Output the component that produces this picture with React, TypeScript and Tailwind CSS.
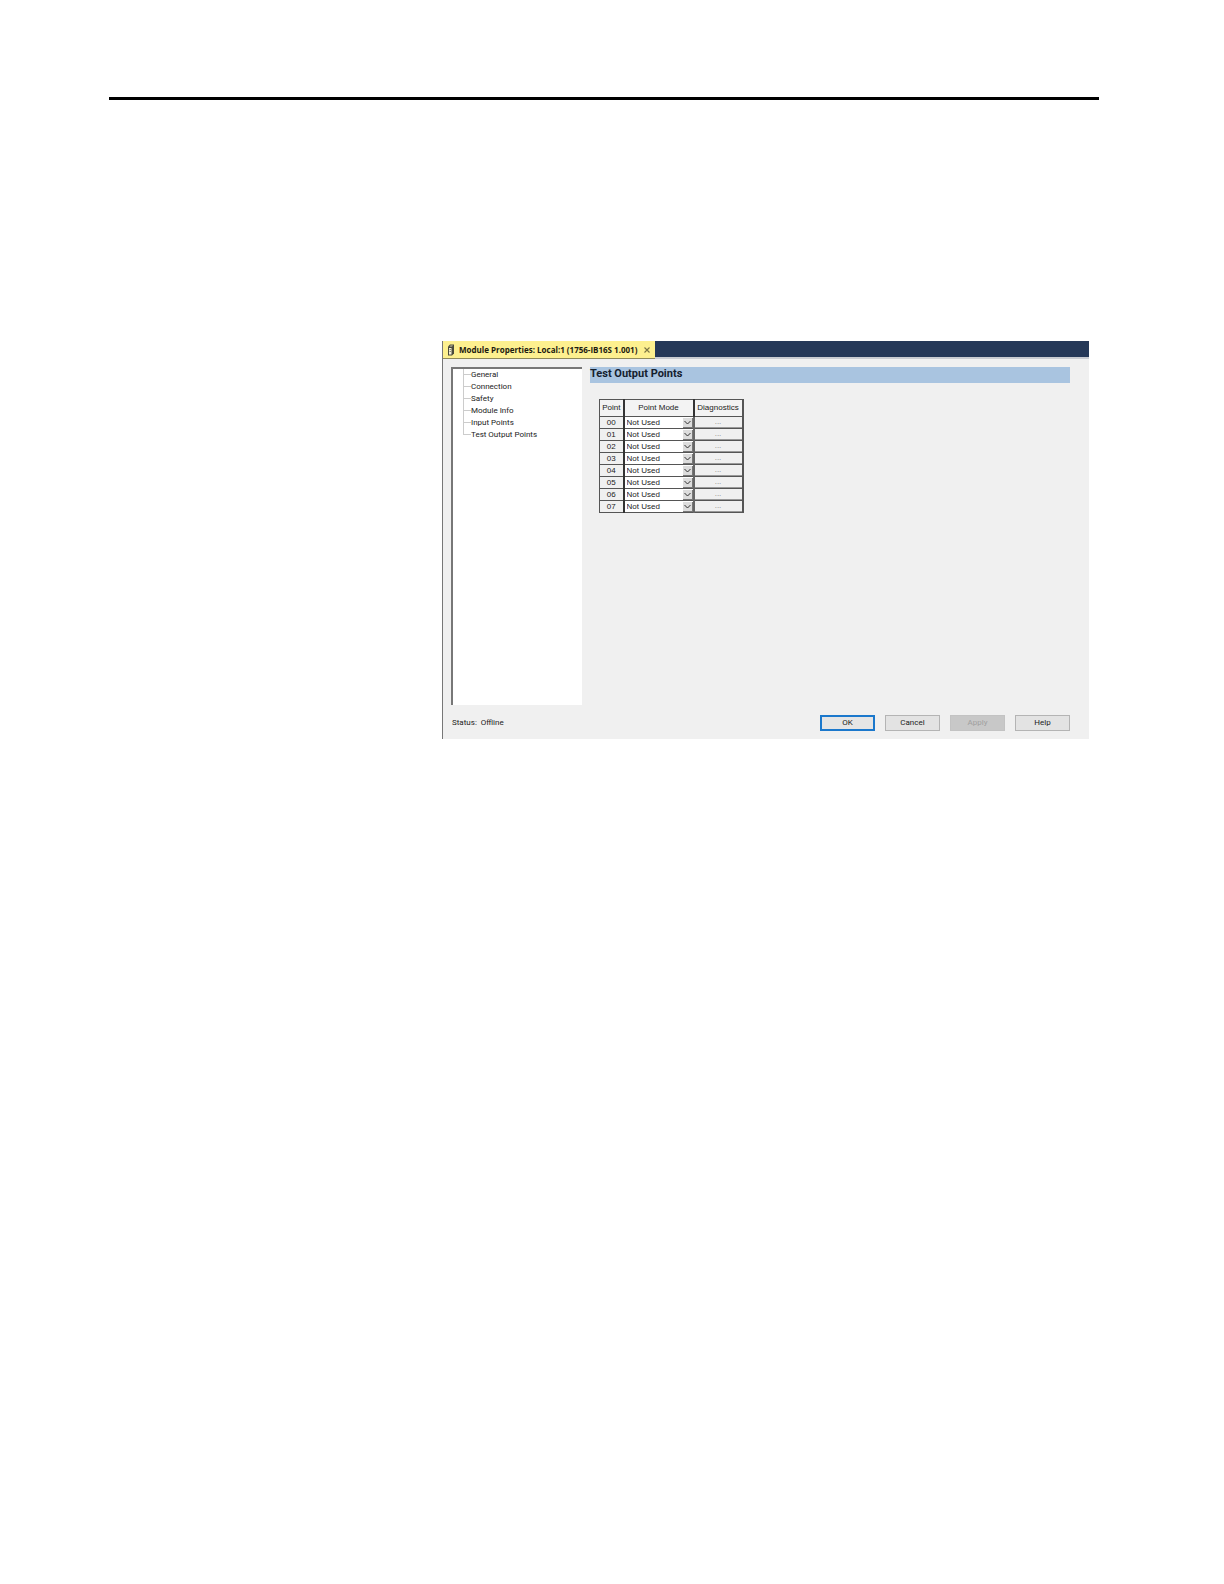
import React from 'react';

const pages = ['General', 'Connection', 'Safety', 'Module Info', 'Input Points', 'Test Output Points'];

const points = ['00', '01', '02', '03', '04', '05', '06', '07'];

const ModuleIcon: React.FC = () => (
  <svg className="shrink-0" width="8" height="12" viewBox="0 0 8 12" aria-hidden="true">
    <path d="M1 2.5 3 .5h4v9l-2 2H1z" fill="#4a4a3c" />
    <path d="M2 4h2.5v6.5H2z" fill="#f4f0d8" />
    <path d="M2.5 2.5 3.5 1.5H6L5 2.5z" fill="#d8d4b0" />
    <path d="M2.5 5.5h1.5M2.5 7.5h1.5" stroke="#77745c" strokeWidth="0.8" />
  </svg>
);

const TitleBar: React.FC = () => (
  <div className="flex h-[18px] border-b-2 border-[#c9ccd2] bg-[#253858]">
    <div className="-mb-0.5 flex w-[212px] items-center border-b border-[#8f8a5a] bg-[#fdf08f] pl-1">
      <ModuleIcon />
      <span className="ml-1 grow whitespace-nowrap font-['Open_Sans',sans-serif] text-[8px] font-bold leading-4 text-[#1c1a10]">
        Module Properties: Local:1 (1756-IB16S 1.001)
      </span>
      <button type="button" aria-label="Close" className="mr-1 flex h-3 w-2 items-center justify-center">
        <svg width="6" height="6" viewBox="0 0 6 6" aria-hidden="true">
          <path d="M.5.5l5 5M5.5.5l-5 5" stroke="#7a7446" strokeWidth="1.1" />
        </svg>
      </button>
    </div>
  </div>
);

const PageTree: React.FC = () => (
  <nav className="w-[131px] shrink-0 border-l-2 border-t-2 border-[#777777] bg-white pl-2.5 font-['Roboto',sans-serif]">
    <ul>
      {pages.map((page) => (
        <li key={page} className="group flex h-3 items-center">
          <span className="flex h-full w-2 flex-col">
            <span className="h-1.5 border-b border-l border-[#cccccc]" />
            <span className="h-1.5 border-l border-[#cccccc] group-last:border-transparent" />
          </span>
          <a href="#" className="whitespace-nowrap text-[8px] leading-3">
            {page}
          </a>
        </li>
      ))}
    </ul>
  </nav>
);

const PointsTable: React.FC = () => (
  <table className="ml-[9px] mt-4 w-[143px] table-fixed border-collapse border border-r-2 border-[#555555] text-[8px] leading-[10px]">
    <colgroup>
      <col className="w-6" />
      <col className="w-[70px]" />
      <col className="w-[49px]" />
    </colgroup>
    <thead>
      <tr className="h-[17px] bg-[#f3f3f3]">
        <th className="border-r-2 border-[#333333] p-0 font-normal">Point</th>
        <th className="border-r-2 border-[#333333] p-0 font-normal">Point Mode</th>
        <th className="p-0 font-normal">Diagnostics</th>
      </tr>
    </thead>
    <tbody>
      {points.map((point) => (
        <tr key={point} className="h-3 border-t border-[#555555]">
          <th className="border-r-2 border-[#333333] bg-[#f0f0f0] p-0 font-normal">{point}</th>
          <td className="border-r-2 border-[#666666] bg-white p-0">
            <div className="relative flex h-[11px]">
              <select
                aria-label={`Point mode ${point}`}
                className="h-[11px] w-full appearance-none pl-0.5 text-[8px] leading-[11px]"
              >
                <option>Not Used</option>
              </select>
              <span className="pointer-events-none absolute bottom-0 right-0 flex h-2.5 w-2.5 items-center justify-center border-b border-r border-[#777777] bg-[#dddddd]">
                <svg width="7" height="5" viewBox="0 0 7 5" aria-hidden="true">
                  <path d="M.5 1l3 3 3-3" fill="none" stroke="#333333" />
                </svg>
              </span>
            </div>
          </td>
          <td className="p-0">
            <button
              type="button"
              aria-label={`Diagnostics ${point}`}
              className="flex h-[11px] w-full items-center justify-center border-b border-[#999999] bg-[#f0f0f0] text-[8px] leading-[8px] text-[#888888]"
            >
              ...
            </button>
          </td>
        </tr>
      ))}
    </tbody>
  </table>
);

const Footer: React.FC = () => (
  <div className="flex items-center pb-2 pl-[9px] pr-[19px] pt-2.5 font-['Roboto',sans-serif] text-[8px] leading-3">
    <span className="mr-auto">Status:&nbsp; Offline</span>
    <div className="flex gap-2.5">
      <button type="button" className="h-4 w-[55px] border-2 border-[#1b78cc] bg-[#e5e5e5]">
        <span className="block leading-3">OK</span>
      </button>
      <button type="button" className="h-4 w-[55px] border border-[#b4b4b4] bg-[#e3e3e3]">
        Cancel
      </button>
      <button type="button" disabled className="h-4 w-[55px] border border-[#c3c3c3] bg-[#c8c8c8] text-[#a0a0a0]">
        Apply
      </button>
      <button type="button" className="h-4 w-[55px] border border-[#b4b4b4] bg-[#e3e3e3]">
        Help
      </button>
    </div>
  </div>
);

const App: React.FC = () => {
  return (
    <main className="min-h-screen bg-white pb-12 pl-[109px] pr-[125px] pt-[97px] font-['Liberation_Sans',Arial,sans-serif] text-[#222222]">
      <hr className="border-0 border-t-[3px] border-black" />
      <section className="ml-[333px] mr-2.5 mt-[241px] border-l border-[#777777] bg-[#f0f0f0]">
        <TitleBar />
        <div className="flex min-h-[346px] gap-2 pl-2 pr-[19px] pt-2">
          <PageTree />
          <div className="grow">
            <h1 className="h-4 bg-[#a9c4e0] font-['Roboto',sans-serif] text-[11px] font-bold leading-[14px] text-[#14202e]">
              Test Output Points
            </h1>
            <PointsTable />
          </div>
        </div>
        <Footer />
      </section>
    </main>
  );
};

export default App;
